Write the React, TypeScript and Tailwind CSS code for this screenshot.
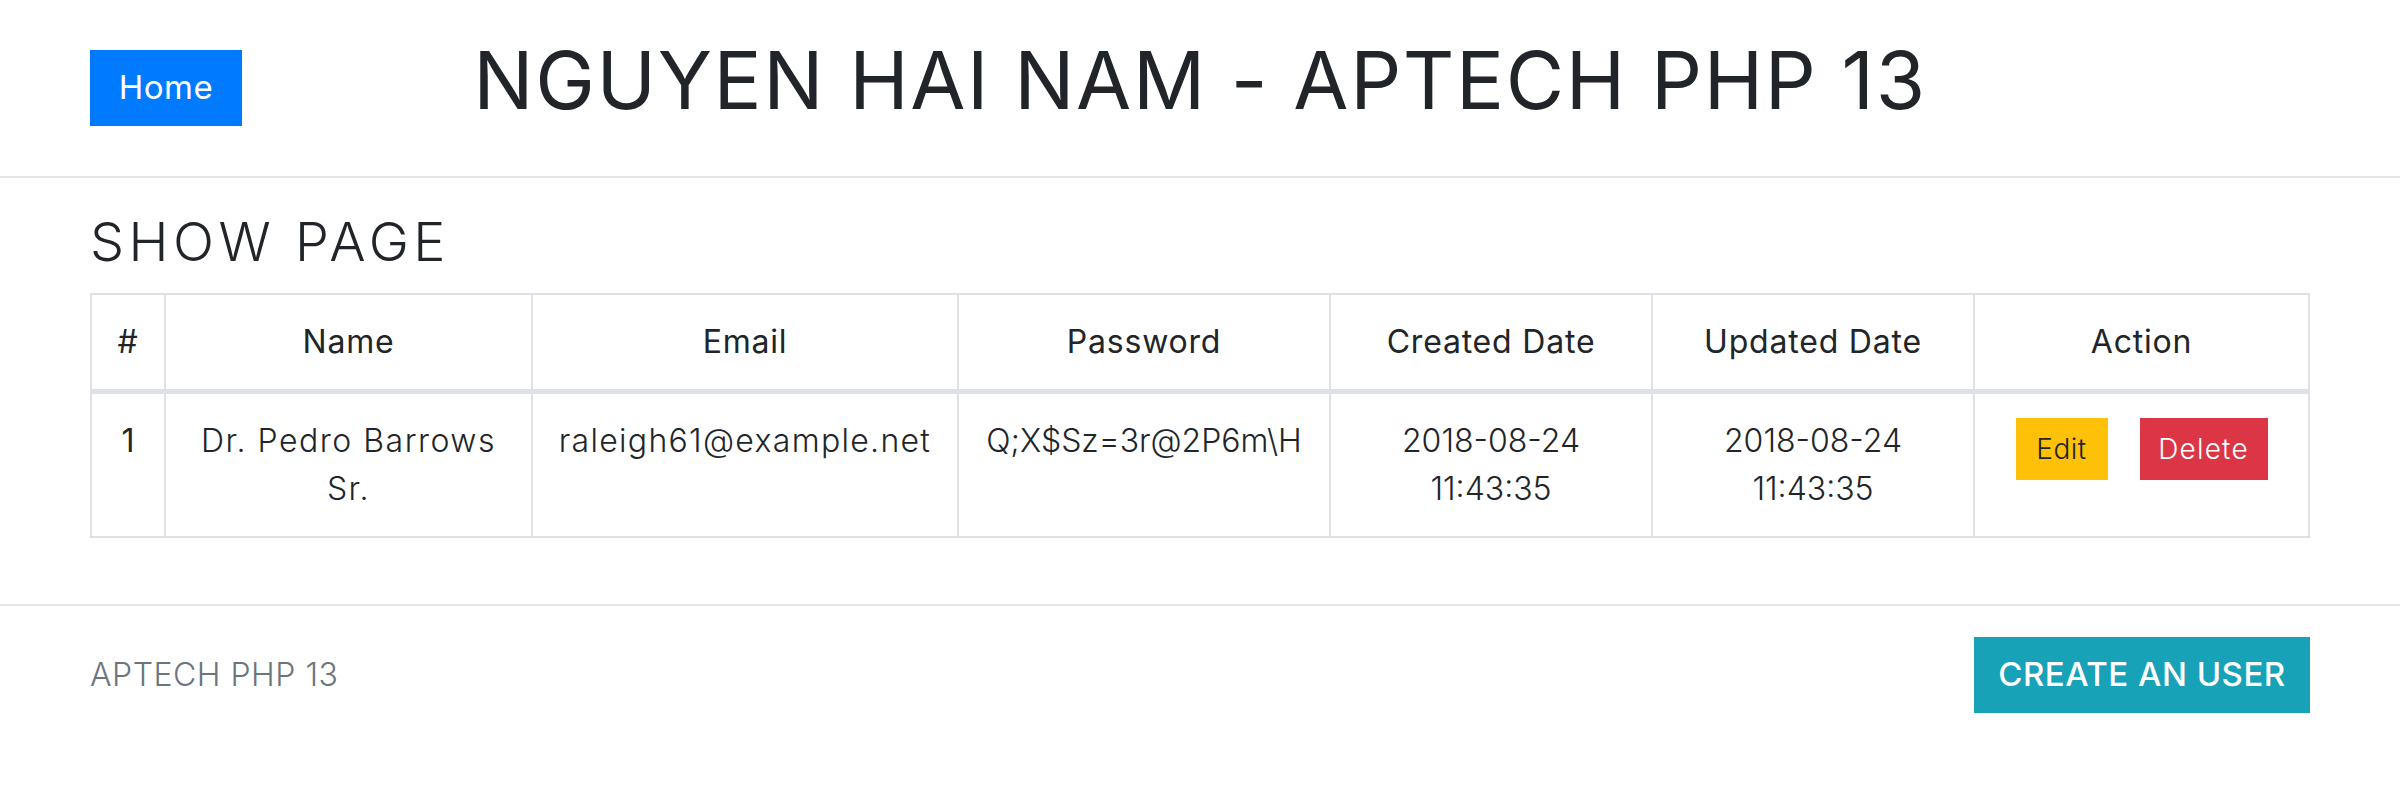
import React from "react";

const font = { fontFamily: "Inter, 'Noto Sans', sans-serif" };

export default function App() {
  const cell = "border-2 border-[#dee2e6] text-center align-top px-[18px] py-[23px] leading-[48px]";
  return (
    <div className="w-[2400px] min-h-[810px] bg-white text-[#212529]" style={font}>
      <header className="h-[178px] border-b-2 border-[#e6e6e6] px-[90px] pt-[50px] grid grid-cols-[1fr_auto_1fr] items-start">
        <div>
          <a className="inline-flex items-center justify-center w-[152px] h-[76px] bg-[#007bff] text-white text-[33px] font-normal tracking-[0.5px]">
            Home
          </a>
        </div>
        <h1 className="text-[80px] leading-[96px] font-normal tracking-[1.6px] mt-[-18px] whitespace-nowrap">
          NGUYEN HAI NAM - APTECH PHP 13
        </h1>
        <div />
      </header>

      <main className="px-[90px]">
        <h2 className="mt-[32px] mb-[19px] text-[54px] leading-[64px] font-light tracking-[4.5px]">SHOW PAGE</h2>
        <table className="w-full table-fixed border-collapse text-[32px]">
          <colgroup>
            <col className="w-[74px]" />
            <col className="w-[367px]" />
            <col className="w-[426px]" />
            <col className="w-[372px]" />
            <col className="w-[322px]" />
            <col className="w-[322px]" />
            <col />
          </colgroup>
          <thead>
            <tr>
              {["#", "Name", "Email", "Password", "Created Date", "Updated Date", "Action"].map((h) => (
                <th key={h} className={`${cell} border-b-[5px] font-normal tracking-[0.8px] align-middle`}>
                  {h}
                </th>
              ))}
            </tr>
          </thead>
          <tbody className="font-light">
            <tr>
              <td className={`${cell} font-normal`}>1</td>
              <td className={`${cell} tracking-[1.5px]`}>Dr. Pedro Barrows Sr.</td>
              <td className={`${cell} tracking-[1.3px]`}>raleigh61@example.net</td>
              <td className={cell}>Q;X$Sz=3r@2P6m\H</td>
              <td className={cell}>2018-08-24 11:43:35</td>
              <td className={cell}>2018-08-24 11:43:35</td>
              <td className={cell}>
                <div className="flex justify-center gap-[32px] pt-[1px]">
                  <button className="h-[62px] w-[92px] bg-[#ffc107] text-[#212529] text-[28px] font-light leading-none tracking-[0.5px]">
                    Edit
                  </button>
                  <button className="h-[62px] w-[128px] bg-[#dc3545] text-white text-[28px] font-light leading-none tracking-[1.2px]">
                    Delete
                  </button>
                </div>
              </td>
            </tr>
          </tbody>
        </table>
      </main>

      <footer className="mt-[66px] border-t-2 border-[#e6e6e6] px-[90px] pt-[31px] flex items-center justify-between">
        <span className="text-[32px] font-light text-[#6c757d] tracking-[0.5px]">APTECH PHP 13</span>
        <button className="h-[76px] w-[336px] bg-[#17a2b8] text-white text-[33px] font-medium tracking-[0.5px]">
          CREATE AN USER
        </button>
      </footer>
    </div>
  );
}
